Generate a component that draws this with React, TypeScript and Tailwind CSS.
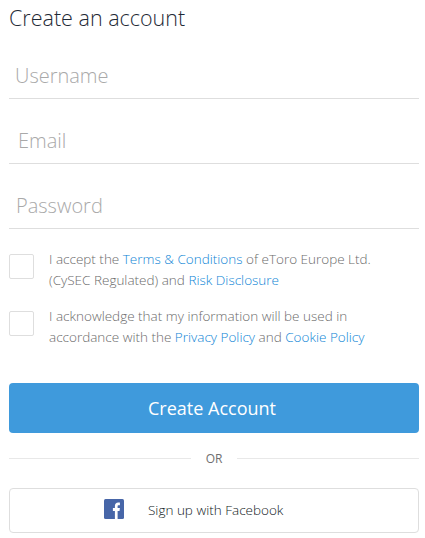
const Field = ({ label, type, indent }: { label: string, type: string, indent: string }) => {
    return (
        <div className="h-[65px] border-b border-[#dedede] flex items-end">
            <input
                type={type}
                placeholder={label}
                className={`w-full h-[46px] pr-2 bg-transparent outline-none font-light text-[20px] placeholder:text-[#a9a9a9] ${indent}`}
            />
        </div>
    )
}

const Link = ({ children }: { children: string }) => (
    <a href="#" className="text-[#0f86d6]">{children}</a>
)

export default function App() {
    return (
        <div className="w-[425px] h-[538px] bg-white overflow-hidden px-[9px] font-['Open_Sans',sans-serif]">
            {/* Title */}
            <h1 className="h-[34px] pt-[3px] text-[21.5px] leading-[30px] font-light text-[#1f2a36]">Create an account</h1>

            {/* Fields */}
            <div className="w-[410px]">
                <Field label="Username" type="text" indent="pl-[6px]" />
                <Field label="Email" type="email" indent="pl-[9px]" />
                <Field label="Password" type="password" indent="pl-[7px]" />
            </div>

            {/* Agreements */}
            <div className="mt-[20px] flex flex-col gap-[15px] text-[13.5px] leading-[21px] font-light text-[#6b6b6b]">
                <div className="flex gap-[15px]">
                    <div className="w-[25px] h-[25px] mt-[5px] shrink-0 rounded-[2px] border border-[#dedede]"></div>
                    <p>
                        I accept the <Link>Terms &amp; Conditions</Link> of eToro Europe Ltd.<br />
                        (CySEC Regulated) and <Link>Risk Disclosure</Link>
                    </p>
                </div>
                <div className="flex gap-[15px]">
                    <div className="w-[25px] h-[25px] mt-[5px] shrink-0 rounded-[2px] border border-[#dedede]"></div>
                    <p>
                        I acknowledge that my information will be used in<br />
                        accordance with the <Link>Privacy Policy</Link> and <Link>Cookie Policy</Link>
                    </p>
                </div>
            </div>

            {/* Buttons */}
            <button className="mt-[35px] w-[410px] h-[50px] pr-[4px] rounded-[4px] bg-[#3f9adc] text-white text-[18px]">
                Create Account
            </button>

            <div className="w-[410px] h-[50px] pt-[1px] flex items-center text-[12px] text-[#6f6f6f]">
                <div className="flex-1 border-t border-[#e8e8e8]"></div>
                <span className="w-[46px] text-center">OR</span>
                <div className="w-[182px] border-t border-[#e8e8e8]"></div>
            </div>

            <button className="mt-[5px] w-[410px] h-[45px] rounded-[4px] border border-[#dedede] flex items-center text-[13.5px] font-light text-[#111a24]">
                <svg viewBox="0 0 20 20" className="w-[20px] h-[20px] ml-[94px] mb-[3px]">
                    <rect width="20" height="20" rx="1.5" fill="#4766a8" />
                    <path d="M10.9 20v-8h-2V9.1h2V7c0-2.3 1.3-3.5 3.3-3.5h1.7v2.8h-1.2c-.9 0-1.1.5-1.1 1.1v1.7h2.3l-.4 2.9h-1.9v8z" fill="#fff" />
                </svg>
                <span className="ml-[24px]">Sign up with Facebook</span>
            </button>
        </div>
    )
}
